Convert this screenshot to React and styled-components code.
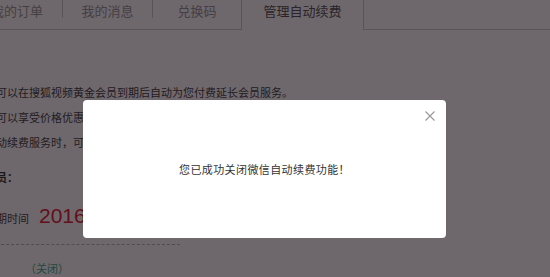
import React from "react";
import styled, { createGlobalStyle } from "styled-components";

const Global = createGlobalStyle`
  html, body {
    margin: 0;
    padding: 0;
    background: #fff;
    width: 550px;
    height: 277px;
    overflow: hidden;
  }
  body {
    font-family: "Noto Sans CJK SC", "Noto Sans", sans-serif;
  }
`;

const Page = styled.div`
  width: 550px;
  height: 277px;
  overflow: hidden;
  background: #fff;
`;

const TabBar = styled.div`
  display: flex;
  align-items: flex-start;
  height: 29px;
  border-bottom: 1px solid #ccc;
  margin-left: -28px;
`;

const Tab = styled.div`
  flex-shrink: 0;
  width: ${(p) => p.$w}px;
  line-height: 22px;
  text-align: center;
  font-size: 13px;
  color: #999;
  white-space: nowrap;
`;

const Separator = styled.div`
  flex-shrink: 0;
  width: 1px;
  height: 18px;
  background: #ccc;
`;

const ActiveTab = styled.div`
  flex-shrink: 0;
  box-sizing: border-box;
  width: 123px;
  height: 30px;
  border-left: 1px solid #ccc;
  border-right: 1px solid #ccc;
  background: #fff;
  line-height: 22px;
  text-align: center;
  font-size: 13px;
  color: #555;
  white-space: nowrap;
`;

const Content = styled.div`
  margin-left: -4px;
  padding-top: 50px;
`;

const Line = styled.p`
  margin: 0;
  font-size: 11px;
  line-height: 25px;
  color: #444;
  white-space: nowrap;
`;

const Label = styled.p`
  margin: 10px 0 0;
  font-size: 11px;
  line-height: 25px;
  color: #333;
  font-weight: 600;
  white-space: nowrap;
`;

const TimeRow = styled.div`
  display: flex;
  align-items: baseline;
  gap: 10px;
  margin-top: 11px;
  line-height: 30px;
  white-space: nowrap;
`;

const TimeLabel = styled.span`
  margin-left: -11px;
  font-size: 11px;
  color: #444;
`;

const TimeValue = styled.span`
  font-size: 21px;
  color: #e42335;
  font-family: "Liberation Sans", "Noto Sans", sans-serif;
`;

const Dashed = styled.div`
  width: 184px;
  margin-top: 11px;
  border-top: 1px dashed #b8b8b8;
`;

const CloseLink = styled.p`
  margin: 11px 0 0 29px;
  font-size: 11px;
  line-height: 25px;
  color: #46b08c;
  white-space: nowrap;
`;

const Overlay = styled.div`
  position: fixed;
  inset: 0;
  box-sizing: border-box;
  display: flex;
  align-items: flex-start;
  padding: 100px 0 0 83px;
  background: rgba(13, 3, 10, 0.6);
`;

const Modal = styled.div`
  position: relative;
  width: 363px;
  height: 138px;
  background: #fff;
  border-radius: 4px;
  display: flex;
  align-items: center;
  justify-content: center;
  font-size: 11px;
  letter-spacing: 0.4px;
  color: #333;
`;

const CloseButton = styled.div`
  position: absolute;
  top: 11px;
  right: 11px;
  width: 10px;
  height: 10px;
  display: flex;
`;

export default function App() {
  return (
    <>
      <Global />
      <Page>
        <TabBar>
          <Tab $w={90}>我的订单</Tab>
          <Separator />
          <Tab $w={89}>我的消息</Tab>
          <Separator />
          <Tab $w={88}>兑换码</Tab>
          <ActiveTab>管理自动续费</ActiveTab>
        </TabBar>
        <Content>
          <Line>可以在搜狐视频黄金会员到期后自动为您付费延长会员服务。</Line>
          <Line>可以享受价格优惠，每月仅需支付较低的会员费用。</Line>
          <Line>动续费服务时，可以随时在本页面关闭自动续费。</Line>
          <Label>员：</Label>
          <TimeRow>
            <TimeLabel>到期时间</TimeLabel>
            <TimeValue>2016-09-26</TimeValue>
          </TimeRow>
          <Dashed />
          <CloseLink>（关闭）</CloseLink>
        </Content>
      </Page>
      <Overlay>
        <Modal>
          <CloseButton>
            <svg width="10" height="10" viewBox="0 0 10 10">
              <path d="M0.5 0.5 L9.5 9.5 M9.5 0.5 L0.5 9.5" stroke="#9a9a9a" strokeWidth="1.2" fill="none" />
            </svg>
          </CloseButton>
          您已成功关闭微信自动续费功能！
        </Modal>
      </Overlay>
    </>
  );
}
